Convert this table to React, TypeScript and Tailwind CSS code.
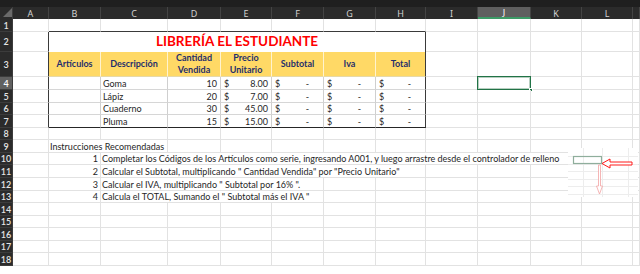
import clsx from 'clsx';
import type { ReactNode } from 'react';

const COLS = ['A', 'B', 'C', 'D', 'E', 'F', 'G', 'H', 'I', 'J', 'K', 'L', 'M'];

// light gridline on every plain cell
const GRID = 'border-r border-b border-[#e2e2e2]';

const items: [string, number, string][] = [
  ['Goma', 10, '8.00'],
  ['Lápiz', 20, '7.00'],
  ['Cuaderno', 30, '45.00'],
  ['Pluma', 15, '15.00'],
];

const steps = [
  { n: 1, span: 'col-span-9', rest: ['L', 'M'], text: 'Completar los Códigos de los Artículos como serie, ingresando A001, y luego arrastre desde el controlador de relleno' },
  { n: 2, span: 'col-span-6', rest: ['I', 'J', 'K', 'L', 'M'], text: 'Calcular el Subtotal, multiplicando " Cantidad Vendida" por "Precio Unitario"' },
  { n: 3, span: 'col-span-4', rest: ['G', 'H', 'I', 'J', 'K', 'L', 'M'], text: 'Calcular el IVA, multiplicando " Subtotal por 16% ".' },
  { n: 4, span: 'col-span-4', rest: ['G', 'H', 'I', 'J', 'K', 'L', 'M'], text: 'Calcula el TOTAL, Sumando el " Subtotal más el IVA "' },
];

const RowHead = ({ n }: { n: number }) => (
  <div
    className={clsx(
      'flex items-center justify-center border-r border-b border-[#3c3c3c] text-[9px] font-semibold',
      n === 4 ? 'bg-[#606060] text-white' : 'bg-[#2b2b2b] text-[#e4e4e4]'
    )}
  >
    {n}
  </div>
);

const Cell = ({ className, children }: { className?: string; children?: ReactNode }) => (
  <div className={clsx('flex items-end whitespace-nowrap', className ?? GRID)}>{children}</div>
);

const plain = (row: number, cols: string[]) =>
  cols.map((c) => <Cell key={`${c}${row}`} />);

const Selection = () => (
  <div className="absolute -left-px -top-px -right-px -bottom-px border border-[#217346] shadow-[inset_0_0_0_1px_#b7cfc0]">
    <div className="absolute -right-[3px] -bottom-[3px] w-[4px] h-[4px] bg-[#217346] border border-white" />
  </div>
);

const Money = ({ value }: { value?: string }) => (
  <div className="flex w-full justify-between pl-[3px] pr-[3px] pb-[1px]">
    <span>$</span>
    <span className={value ? '' : 'pr-[11px]'}>{value ?? '-'}</span>
  </div>
);

const FillHint = () => (
  <div className="absolute left-[568px] top-[148px] w-[70px] h-[49px] bg-white">
    <svg width="70" height="49" viewBox="0 0 70 49">
      {[8, 16, 23, 31, 38, 46].map((y) => (
        <line key={y} x1="0" x2="70" y1={y + 0.5} y2={y + 0.5} stroke="#ededed" />
      ))}
      {[15, 34, 60].map((x) => (
        <line key={x} x1={x + 0.5} x2={x + 0.5} y1="0" y2="49" stroke="#ededed" />
      ))}
      <rect x="5.5" y="8.5" width="28" height="7" fill="none" stroke="#8fae9c" strokeWidth="1.2" />
      <path d="M34 15.5 L42 11 L42 14 L64 14 L64 17 L42 17 L42 20 Z" fill="white" stroke="#ff1a1a" strokeWidth="1" />
      <path d="M30.5 17 L32.5 17 L32.5 38 L34.5 38 L31.5 46 L28.5 38 L30.5 38 Z" fill="white" stroke="#f2a3a3" strokeWidth="0.8" />
    </svg>
  </div>
);

export default function App() {
  return (
    <div className="relative w-[640px] h-[274px] bg-white overflow-hidden font-['Lato',sans-serif] text-[#262626]">
      <div className="h-[7px] bg-[#1f1f1f]" />
      <div className="grid grid-cols-[13px_36px_52px_67px_53px_51px_52px_52px_50px_52px_53px_51px_51px_7px] grid-rows-[12px_13px_20px_25px_13px_13px_12px_13px_12px_13px_12px_13px_13px_12px_13px_12px_13px_12px_13px] text-[9px] leading-none">
        {/* column headers */}
        <div className="relative bg-[#2b2b2b] border-r border-[#3f3f3f]">
          <svg className="absolute left-[3px] top-[1px]" width="9" height="9" viewBox="0 0 9 9">
            <path d="M9 0 L9 9 L0 9 Z" fill="#6a6a6a" />
          </svg>
        </div>
        {COLS.map((c) => (
          <div
            key={c}
            className={clsx(
              "flex items-center justify-center border-r border-[#444] text-[9px] font-['Noto_Sans',sans-serif]",
              c === 'J' ? 'bg-[#5f5f5f] text-white border-b-2 border-b-[#3c9a66]' : 'bg-[#2b2b2b] text-[#d2d2d2]'
            )}
          >
            {c === 'M' ? '' : c}
          </div>
        ))}

        {/* row 1 */}
        <RowHead n={1} />
        <Cell />
        {['B', 'C', 'D', 'E', 'F', 'G', 'H'].map((c) => (
          <Cell key={c} className="border-r border-b border-r-[#e2e2e2] border-b-[#3a3a3a]" />
        ))}
        {plain(1, ['I', 'J', 'K', 'L', 'M'])}

        {/* row 2: title */}
        <RowHead n={2} />
        <Cell className="border-r border-b border-r-[#3a3a3a] border-b-[#e2e2e2]" />
        <div className="col-span-7 flex items-center justify-center border-r border-r-[#3a3a3a] text-[13.5px] font-bold text-[#ff0000]">
          LIBRERÍA EL ESTUDIANTE
        </div>
        {plain(2, ['I', 'J', 'K', 'L', 'M'])}

        {/* row 3: headers */}
        <RowHead n={3} />
        <Cell className="border-r border-b border-r-[#3a3a3a] border-b-[#e2e2e2]" />
        {['Artículos', 'Descripción', 'Cantidad\nVendida', 'Precio\nUnitario', 'Subtotal', 'Iva', 'Total'].map((h, i) => (
          <div
            key={h}
            className={clsx(
              'flex items-center justify-center whitespace-pre-line text-center leading-[12px] bg-[#ffd966] border-r border-b border-b-[#e6d9a8] font-bold text-[#1f2f6b]',
              i === 6 ? 'border-r-[#3a3a3a]' : 'border-r-[#fff3cf]'
            )}
          >
            {h}
          </div>
        ))}
        {plain(3, ['I', 'J', 'K', 'L', 'M'])}

        {/* rows 4-7: items */}
        {items.map(([name, qty, price], i) => {
          const row = i + 4;
          const last = i === items.length - 1;
          const b = clsx('border-r border-b border-r-[#cfcfcf]', last ? 'border-b-[#262626]' : 'border-b-[#d6d6d6]');
          return [
            <RowHead key={`h${row}`} n={row} />,
            <Cell key={`A${row}`} className="border-r border-b border-r-[#3a3a3a] border-b-[#e2e2e2]" />,
            <Cell key={`B${row}`} className={b} />,
            <Cell key={`C${row}`} className={clsx(b, 'pl-[2px] pb-[1px]')}>{name}</Cell>,
            <Cell key={`D${row}`} className={clsx(b, 'justify-end pr-[3px] pb-[1px]')}>{qty}</Cell>,
            <Cell key={`E${row}`} className={b}><Money value={price} /></Cell>,
            <Cell key={`F${row}`} className={b}><Money /></Cell>,
            <Cell key={`G${row}`} className={b}><Money /></Cell>,
            <Cell key={`H${row}`} className={clsx('border-r border-b border-r-[#3a3a3a]', last ? 'border-b-[#262626]' : 'border-b-[#d6d6d6]')}><Money /></Cell>,
            <Cell key={`I${row}`} />,
            <Cell key={`J${row}`} className={clsx(GRID, 'relative')}>{row === 4 && <Selection />}</Cell>,
            <Cell key={`K${row}`} />,
            <Cell key={`L${row}`} />,
            <Cell key={`M${row}`} />,
          ];
        })}

        {/* row 8 */}
        <RowHead n={8} />
        {plain(8, COLS)}

        {/* row 9 */}
        <RowHead n={9} />
        <Cell />
        <Cell className={clsx(GRID, 'col-span-2 pl-[1px] pb-[1px]')}>Instrucciones Recomendadas</Cell>
        {plain(9, ['D', 'E', 'F', 'G', 'H', 'I', 'J', 'K', 'L', 'M'])}

        {/* rows 10-13 */}
        {steps.map((s) => {
          const row = s.n + 9;
          return [
            <RowHead key={`h${row}`} n={row} />,
            <Cell key={`A${row}`} />,
            <Cell key={`B${row}`} className={clsx(GRID, 'justify-end pr-[2px] pb-[1px]')}>{s.n}</Cell>,
            <Cell key={`C${row}`} className={clsx(GRID, s.span, 'pl-[1px] pb-[1px]')}>{s.text}</Cell>,
            ...plain(row, s.rest),
          ];
        })}

        {/* rows 14-18 */}
        {[14, 15, 16, 17, 18].map((row) => [<RowHead key={`h${row}`} n={row} />, ...plain(row, COLS)])}
      </div>
      <FillHint />
    </div>
  );
}
